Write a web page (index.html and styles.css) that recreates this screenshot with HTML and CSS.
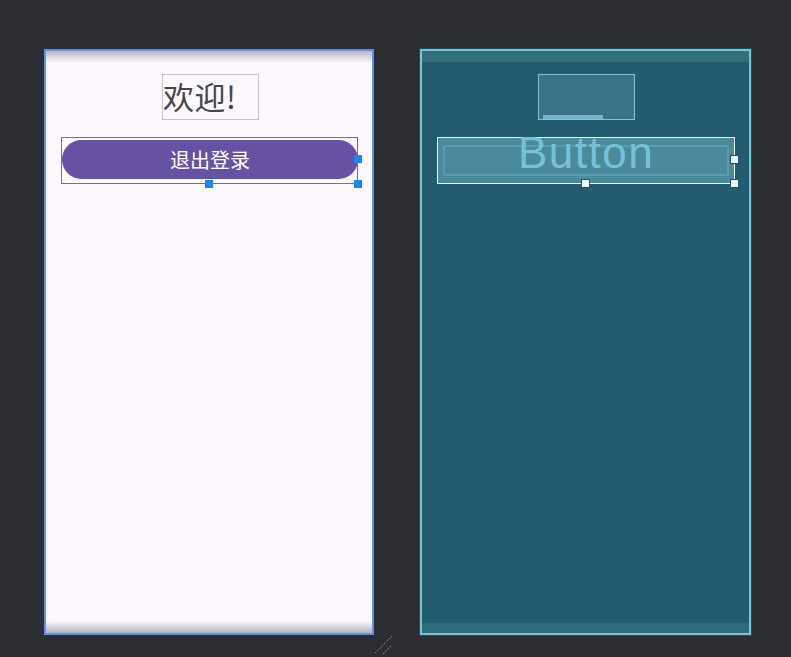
FILE: index.html
```html
<!DOCTYPE html>
<html lang="zh">
<head>
<meta charset="utf-8">
<link rel="stylesheet" href="styles.css">
</head>
<body>
<div class="canvas">
  <div class="screen design">
    <div class="shade-top"></div>
    <div class="content">
      <div class="textview">欢迎!</div>
      <div class="sel">
        <div class="pill">退出登录</div>
        <span class="handle h-rm"></span>
        <span class="handle h-bm"></span>
        <span class="handle h-br"></span>
      </div>
    </div>
    <div class="shade-bottom"></div>
    <svg class="grip" width="20" height="20" viewBox="0 0 20 20">
      <line x1="1" y1="18" x2="18" y2="1" stroke="#8a8d92" stroke-width="1" stroke-dasharray="1.5 1"/>
      <line x1="9" y1="19" x2="18" y2="10" stroke="#8a8d92" stroke-width="1" stroke-dasharray="1.5 1"/>
    </svg>
  </div>
  <div class="screen blueprint">
    <div class="band-top"></div>
    <div class="content">
      <div class="bp-text"><span class="bp-underline"></span></div>
      <div class="bp-sel">
        <span class="bp-inner"></span>
        <span class="bp-label">Button</span>
        <span class="bhandle b-rm"></span>
        <span class="bhandle b-bm"></span>
        <span class="bhandle b-br"></span>
      </div>
    </div>
    <div class="band-bottom"></div>
  </div>
</div>
</body>
</html>
```

FILE: styles.css
```css
html, body {
  margin: 0;
  padding: 0;
  background: #2b2d30;
  width: 791px;
  height: 657px;
  overflow: hidden;
}

.canvas {
  display: flex;
  gap: 46px;
  padding: 49px 0 0 44px;
}

.screen {
  position: relative;
  box-sizing: border-box;
  height: 586px;
  display: flex;
  flex-direction: column;
}

.design {
  width: 330px;
  border: 2px solid #5f8ff0;
  background: #fdf8fe;
}

.shade-top {
  height: 12px;
  background: linear-gradient(#b9b8bb, #fdf8fe);
  flex: none;
}

.shade-bottom {
  height: 12px;
  background: linear-gradient(#fdf8fe, #b4b3b6);
  flex: none;
}

.content {
  flex: 1;
  display: flex;
  flex-direction: column;
  align-items: flex-start;
}

.textview {
  box-sizing: border-box;
  width: 97px;
  height: 46px;
  margin: 11px 0 0 116px;
  border: 1px solid #c4c2c6;
  font-family: "Noto Sans CJK SC", sans-serif;
  font-size: 31px;
  letter-spacing: 0.5px;
  line-height: 42px;
  color: #47454c;
  white-space: nowrap;
}

.sel {
  position: relative;
  box-sizing: border-box;
  width: 297px;
  height: 47px;
  margin: 17px 0 0 15px;
  border: 1px solid #1e88f0;
  padding: 2px 0 3px 0;
}

.pill {
  height: 39px;
  margin-right: -1px;
  border-radius: 20px;
  background: #6751a3;
  color: #ffffff;
  font-family: "Noto Sans CJK SC", sans-serif;
  font-size: 20px;
  line-height: 39px;
  text-align: center;
}

.handle {
  position: absolute;
  width: 8px;
  height: 8px;
  background: #1a86f2;
}
.h-rm { right: -5px; top: 17px; }
.h-bm { left: 143px; bottom: -5px; }
.h-br { right: -5px; bottom: -5px; }

.grip {
  position: absolute;
  right: -22px;
  bottom: -22px;
}

.blueprint {
  width: 331px;
  border: 2px solid #7cc1d4;
  outline: 1px solid #1f4e5c;
  background: #235c6e;
}

.band-top {
  height: 11px;
  background: #346f80;
  flex: none;
}

.band-bottom {
  height: 10px;
  background: #306b7c;
  flex: none;
}

.bp-text {
  position: relative;
  box-sizing: border-box;
  width: 97px;
  height: 46px;
  margin: 12px 0 0 116px;
  border: 1px solid #7ec6da;
  background: #3b7386;
}

.bp-underline {
  position: absolute;
  left: 4px;
  bottom: 0;
  width: 60px;
  height: 4px;
  background: #70b8d0;
}

.bp-sel {
  position: relative;
  box-sizing: border-box;
  width: 298px;
  height: 47px;
  margin: 17px 0 0 15px;
  border: 1px solid #f2fbff;
  background: #4a8a9c;
  display: flex;
  justify-content: center;
}

.bp-inner {
  position: absolute;
  left: 5px;
  right: 5px;
  top: 7px;
  bottom: 7px;
  border: 2px solid #5a9db0;
  border-radius: 3px;
}

.bp-label {
  position: relative;
  display: block;
  margin-top: -7px;
  font-family: "Liberation Sans", Arial, sans-serif;
  font-size: 44px;
  letter-spacing: 1.5px;
  line-height: 44px;
  color: #76c1d8;
}

.bhandle {
  position: absolute;
  box-sizing: border-box;
  width: 9px;
  height: 9px;
  background: #f2fbff;
  border: 1px solid #1f5566;
}
.b-rm { right: -5px; top: 17px; }
.b-bm { left: 143px; bottom: -5px; }
.b-br { right: -5px; bottom: -5px; }
```
